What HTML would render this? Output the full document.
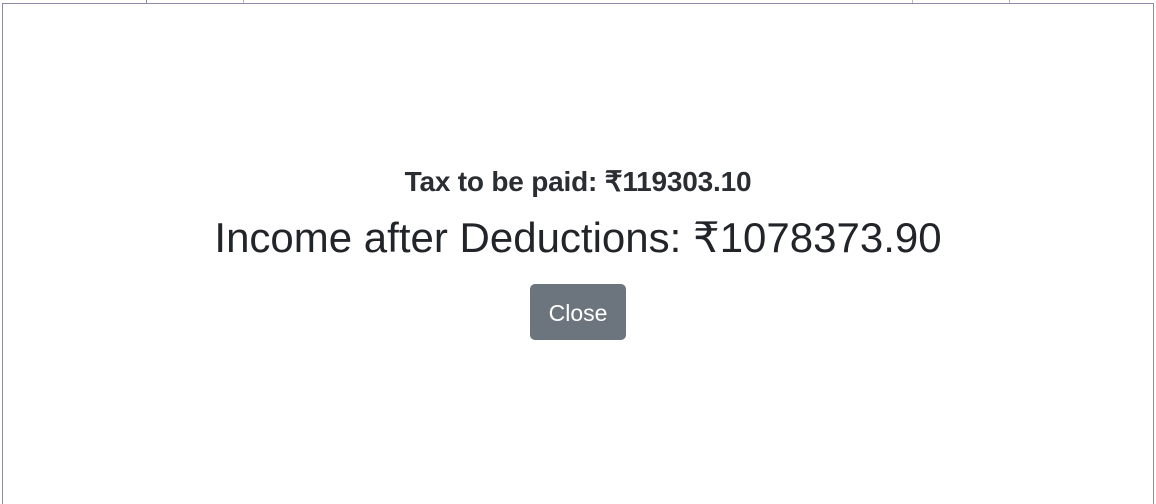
<!DOCTYPE html><html><head><style>
body{margin:0;width:1156px;height:496px;background:#fff;position:relative;overflow:hidden;font-family:"Liberation Sans",sans-serif;color:#212529}
.box{position:absolute;left:2px;top:3px;width:1150px;height:500px;border:1px solid #8e8aa8;border-bottom:none}
.v{position:absolute;top:0;height:3px;width:1px;background:#aaa}
h5{position:absolute;left:0;right:0;top:165px;margin:0;text-align:center;font-size:28px;font-weight:bold;line-height:34px;letter-spacing:-0.2px;color:#2a2d31}
h2{position:absolute;left:0;right:0;top:213px;margin:0;text-align:center;font-size:42px;font-weight:normal;line-height:50px;letter-spacing:0}
.btn{position:absolute;left:530px;top:284px;width:96px;height:56px;background:#6c757d;border-radius:5px;color:#fff;font-size:23px;line-height:58px;text-align:center}
</style></head><body>
<div class="box"></div>
<div class="v" style="left:146px;background:#8e8aa8"></div>
<div class="v" style="left:243px;background:#bbb"></div>
<div class="v" style="left:912px;background:#bbb"></div>
<div class="v" style="left:1009px;background:#bbb"></div>
<h5>Tax to be paid: ₹119303.10</h5>
<h2>Income after Deductions: ₹1078373.90</h2>
<div class="btn">Close</div>
</body></html>
